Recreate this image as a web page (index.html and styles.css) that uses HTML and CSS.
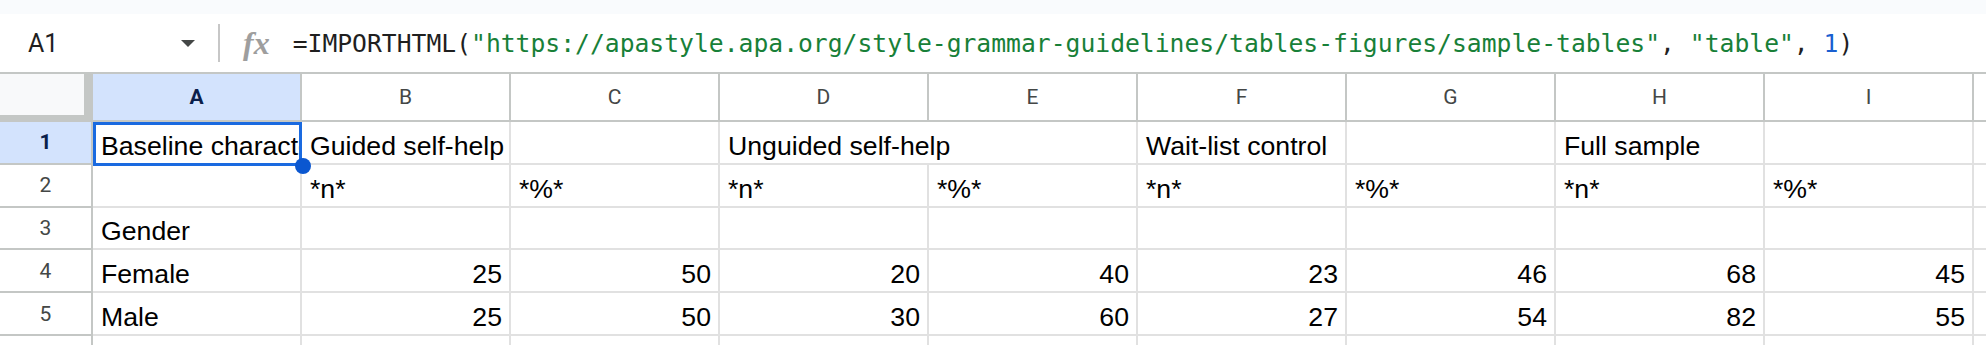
FILE: index.html
```html
<!DOCTYPE html>
<html>
<head>
<meta charset="utf-8">
<link rel="stylesheet" href="styles.css">
</head>
<body>
<div class="sheet">
  <div class="top-strip"></div>
  <div class="formula-bar">
    <div class="name-box">
      <span class="name">A1</span>
      <svg class="caret" width="14" height="7" viewBox="0 0 14 7"><path d="M0 0H14L7 7Z" fill="#444746"/></svg>
    </div>
    <div class="divider"></div>
    <span class="fx">fx</span>
    <div class="formula"><span class="f-fn">=IMPORTHTML(</span><span class="f-str">"https://apastyle.apa.org/style-grammar-guidelines/tables-figures/sample-tables"</span>, <span class="f-str">"table"</span>, <span class="f-num">1</span>)</div>
  </div>
  <div class="grid">
    <div class="corner"></div>
    <div class="colhead active">A</div>
    <div class="colhead">B</div>
    <div class="colhead">C</div>
    <div class="colhead">D</div>
    <div class="colhead">E</div>
    <div class="colhead">F</div>
    <div class="colhead">G</div>
    <div class="colhead">H</div>
    <div class="colhead">I</div>
    <div class="colhead"></div>

    <div class="rowhead active">1</div>
    <div class="cell sel"><span class="clip">Baseline characteristic</span><div class="sel-box"></div><div class="handle"></div></div>
    <div class="cell">Guided self-help</div>
    <div class="cell"></div>
    <div class="cell span2">Unguided self-help</div>
    <div class="cell">Wait-list control</div>
    <div class="cell"></div>
    <div class="cell">Full sample</div>
    <div class="cell"></div>
    <div class="cell"></div>

    <div class="rowhead">2</div>
    <div class="cell"></div>
    <div class="cell">*n*</div>
    <div class="cell">*%*</div>
    <div class="cell">*n*</div>
    <div class="cell">*%*</div>
    <div class="cell">*n*</div>
    <div class="cell">*%*</div>
    <div class="cell">*n*</div>
    <div class="cell">*%*</div>
    <div class="cell"></div>

    <div class="rowhead">3</div>
    <div class="cell">Gender</div>
    <div class="cell"></div>
    <div class="cell"></div>
    <div class="cell"></div>
    <div class="cell"></div>
    <div class="cell"></div>
    <div class="cell"></div>
    <div class="cell"></div>
    <div class="cell"></div>
    <div class="cell"></div>

    <div class="rowhead">4</div>
    <div class="cell">Female</div>
    <div class="cell num">25</div>
    <div class="cell num">50</div>
    <div class="cell num">20</div>
    <div class="cell num">40</div>
    <div class="cell num">23</div>
    <div class="cell num">46</div>
    <div class="cell num">68</div>
    <div class="cell num">45</div>
    <div class="cell"></div>

    <div class="rowhead">5</div>
    <div class="cell">Male</div>
    <div class="cell num">25</div>
    <div class="cell num">50</div>
    <div class="cell num">30</div>
    <div class="cell num">60</div>
    <div class="cell num">27</div>
    <div class="cell num">54</div>
    <div class="cell num">82</div>
    <div class="cell num">55</div>
    <div class="cell"></div>

    <div class="rowhead"></div>
    <div class="cell"></div>
    <div class="cell"></div>
    <div class="cell"></div>
    <div class="cell"></div>
    <div class="cell"></div>
    <div class="cell"></div>
    <div class="cell"></div>
    <div class="cell"></div>
    <div class="cell"></div>
    <div class="cell"></div>
  </div>
</div>
</body>
</html>
```
FILE: styles.css
```css
html, body {
  margin: 0;
  padding: 0;
}
body {
  width: 1986px;
  height: 345px;
  overflow: hidden;
  background: #ffffff;
}
.sheet {
  width: 1986px;
  height: 345px;
  overflow: hidden;
}
.top-strip {
  height: 14px;
  background: #f9fbfd;
}
.formula-bar {
  height: 58px;
  display: flex;
  align-items: center;
  border-bottom: 2px solid #c4c7c5;
  background: #ffffff;
}
.name-box {
  width: 218px;
  box-sizing: border-box;
  padding: 0 23px 0 28px;
  display: flex;
  align-items: center;
  justify-content: space-between;
}
.name {
  font-family: Roboto, "Liberation Sans", sans-serif;
  font-size: 25px;
  color: #1f1f1f;
}
.caret {
  display: block;
}
.divider {
  width: 2px;
  height: 38px;
  background: #c7c7c7;
}
.fx {
  margin-left: 23px;
  font-family: "Liberation Serif", serif;
  font-style: italic;
  font-weight: bold;
  font-size: 32px;
  color: #9e9e9e;
  line-height: 1;
}
.formula {
  margin-left: 23px;
  font-family: "DejaVu Sans Mono", "Liberation Mono", monospace;
  font-size: 24.7px;
  color: #1f1f1f;
  white-space: nowrap;
}
.f-str {
  color: #188038;
}
.f-num {
  color: #1a5fd0;
}
.grid {
  display: grid;
  grid-template-columns: 93px repeat(9, 209px) 1fr;
  grid-template-rows: 48px repeat(6, 42.8px);
  height: 271px;
  overflow: hidden;
}
.grid > div {
  box-sizing: border-box;
  min-width: 0;
}
.corner {
  background: #f8f9fa;
  border-right: 9px solid #c4c7c5;
  border-bottom: 7px solid #c4c7c5;
}
.colhead {
  display: flex;
  align-items: center;
  justify-content: center;
  font-family: Roboto, "Liberation Sans", sans-serif;
  font-size: 21px;
  color: #444746;
  background: #ffffff;
  border-right: 2px solid #c4c7c5;
  border-bottom: 2px solid #c4c7c5;
  overflow: hidden;
}
.colhead.active,
.rowhead.active {
  background: #d3e3fd;
  color: #0b1f4b;
  font-weight: bold;
}
.rowhead {
  display: flex;
  align-items: center;
  justify-content: center;
  font-family: Roboto, "Liberation Sans", sans-serif;
  font-size: 21px;
  color: #444746;
  background: #ffffff;
  border-right: 2px solid #c4c7c5;
  border-bottom: 2px solid #c4c7c5;
  overflow: hidden;
}
.cell {
  display: flex;
  align-items: flex-end;
  padding: 0 7px 1px 8px;
  font-family: "Liberation Sans", Arial, sans-serif;
  font-size: 26.67px;
  color: #000000;
  white-space: nowrap;
  overflow: hidden;
  border-right: 2px solid #e1e1e1;
  border-bottom: 2px solid #e1e1e1;
}
.cell.span2 {
  grid-column: span 2;
}
.cell.num {
  justify-content: flex-end;
}
.cell.sel {
  position: relative;
  overflow: visible;
  z-index: 2;
}
.clip {
  flex: 1;
  min-width: 0;
  overflow: hidden;
  margin-right: -7px;
}
.sel-box {
  position: absolute;
  left: 0;
  top: 0;
  right: -2px;
  bottom: -3px;
  border: 3px solid #1a6ae0;
}
.handle {
  position: absolute;
  right: -11px;
  bottom: -11px;
  width: 16px;
  height: 16px;
  border-radius: 50%;
  background: #0b57d0;
}
```
